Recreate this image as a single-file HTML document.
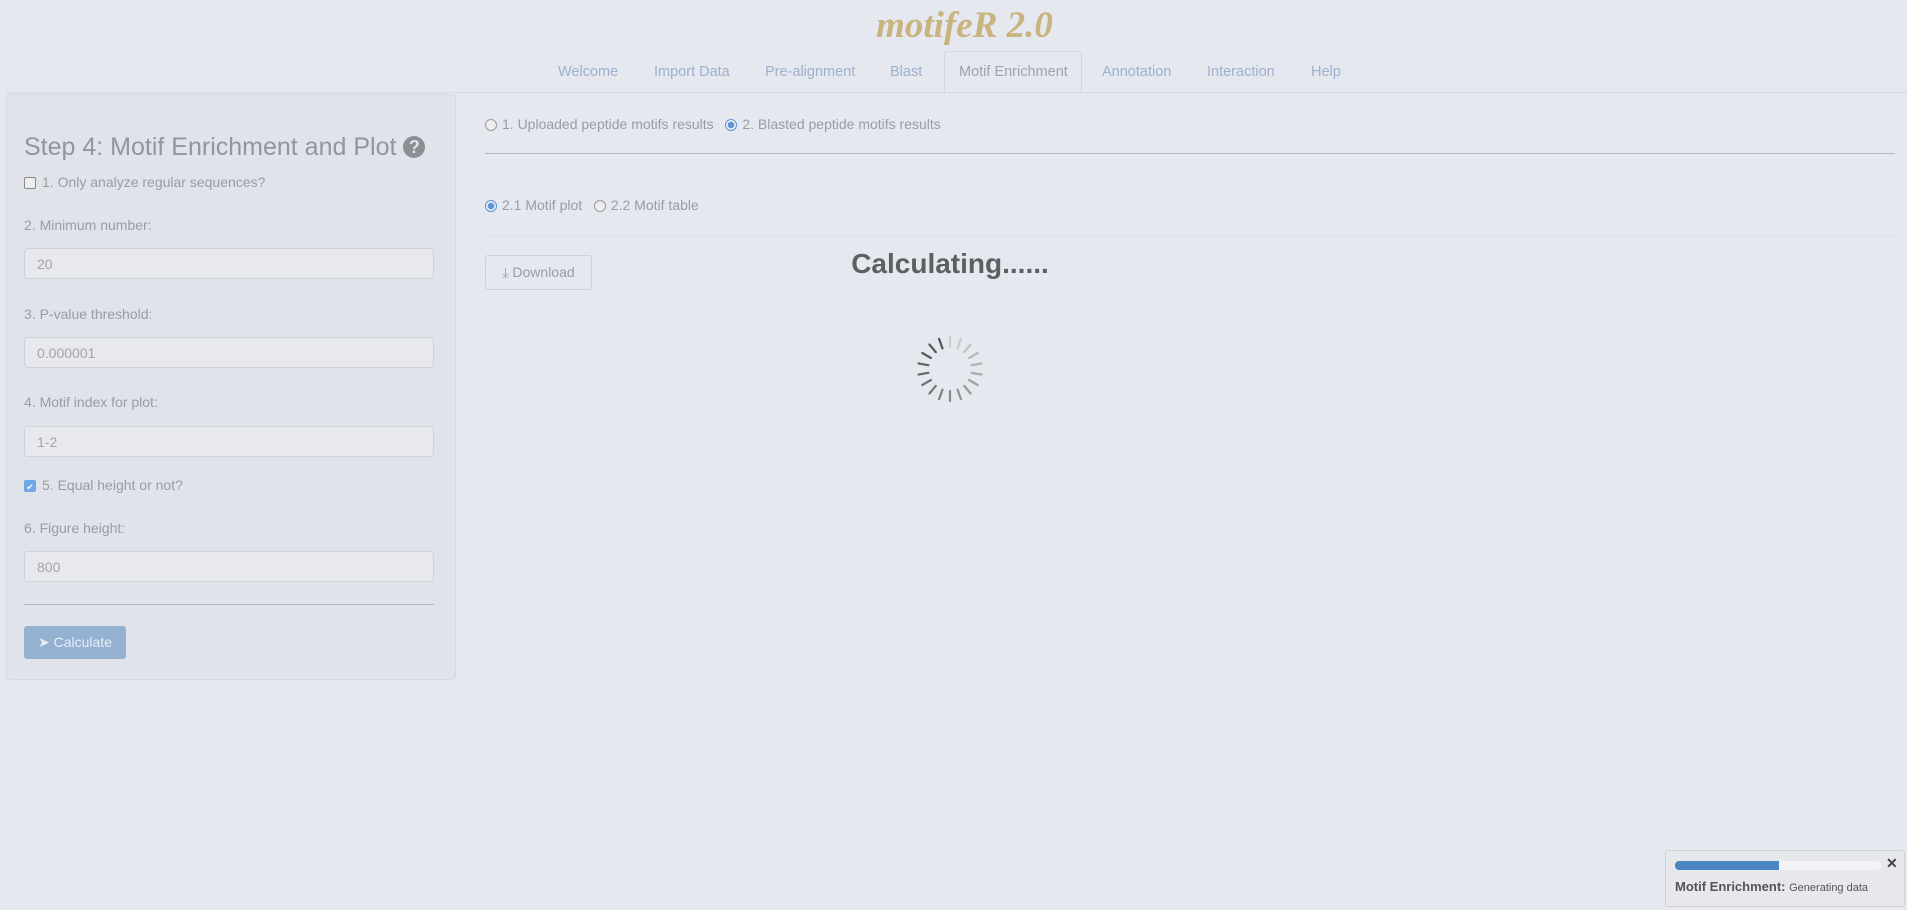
<!DOCTYPE html>
<html><head><meta charset="utf-8"><style>
body{margin:0;width:1907px;height:910px;background:#e5e8ef;font-family:"Liberation Sans",sans-serif;font-size:14px;color:#9a9ca3;position:relative;overflow:hidden}
.a{position:absolute}
.title{left:0;width:1907px;top:4px;text-align:center;font-family:"Liberation Serif",serif;font-style:italic;font-weight:bold;font-size:37px;color:#c9b47e;padding-left:22px;box-sizing:border-box}
.nav{top:92px;left:6px;right:0;border-top:1px solid #d6d9e0}
.tab{top:64px;color:#9db0cc;font-size:14.5px}
.act{left:944px;top:51px;width:136px;height:42px;border:1px solid #d4d7de;border-bottom:none;border-radius:4px 4px 0 0;background:#e5e8ef}
.side{left:6px;top:94px;width:448px;height:584px;background:#e0e3ea;border:1px solid #d6d9e0;border-radius:4px}
.inp{left:24px;height:31px;border:1px solid #cfd2d9;border-radius:4px;background:#e7e9ef;color:#a3a5ab;font-size:14px;line-height:31px;padding-left:12px;box-sizing:border-box;width:410px}
.lbl{left:24px;font-size:14px}
.cb{width:12px;height:12px;line-height:12px;overflow:hidden;border:1px solid #888;border-radius:2px;background:#eee;display:inline-block;vertical-align:-2px;margin-right:6px;box-sizing:border-box;text-align:center;font-size:9px}
.rd{width:12px;height:12px;border:1px solid #999;border-radius:50%;display:inline-block;vertical-align:-2px;margin-right:5px;box-sizing:border-box;background:#eee}
.rd.on{border-color:#5b95d9;background:radial-gradient(circle,#5b95d9 0 3px,#eee 3.5px)}
</style></head><body>
<div class="a title">motifeR 2.0</div>
<div class="a act"></div>
<div class="a nav"></div>
<div class="a tab" style="left:558px">Welcome</div>
<div class="a tab" style="left:654px">Import Data</div>
<div class="a tab" style="left:765px">Pre-alignment</div>
<div class="a tab" style="left:890px">Blast</div>
<div class="a tab" style="left:959px;color:#9ea3ab">Motif Enrichment</div>
<div class="a tab" style="left:1102px">Annotation</div>
<div class="a tab" style="left:1207px">Interaction</div>
<div class="a tab" style="left:1311px">Help</div>

<div class="a side"></div>
<div class="a" style="left:24px;top:133px;font-size:25px;color:#93959c">Step 4: Motif Enrichment and Plot <span style="display:inline-block;width:22px;height:22px;border-radius:50%;background:#8c8e94;color:#e0e3ea;font-size:18px;font-weight:bold;text-align:center;line-height:22px;vertical-align:2px">?</span></div>
<div class="a lbl" style="top:174px"><span class="cb"></span>1. Only analyze regular sequences?</div>
<div class="a lbl" style="top:217px">2. Minimum number:</div>
<div class="a inp" style="top:248px">20</div>
<div class="a lbl" style="top:306px">3. P-value threshold:</div>
<div class="a inp" style="top:337px">0.000001</div>
<div class="a lbl" style="top:394px">4. Motif index for plot:</div>
<div class="a inp" style="top:426px">1-2</div>
<div class="a lbl" style="top:477px"><span class="cb" style="background:#6fa6e6;border-color:#6fa6e6;color:#fff">✔</span>5. Equal height or not?</div>
<div class="a lbl" style="top:520px">6. Figure height:</div>
<div class="a inp" style="top:551px">800</div>
<div class="a" style="left:24px;top:604px;width:410px;border-top:1px solid #b4b7be"></div>
<div class="a" style="left:24px;top:626px;width:102px;height:33px;background:#94b1d1;border-radius:3px;color:#e8eef6;line-height:33px;text-align:center;font-size:14px">➤ Calculate</div>

<div class="a" style="left:485px;top:116px"><span class="rd"></span>1. Uploaded peptide motifs results &nbsp;&nbsp;<span class="rd on"></span>2. Blasted peptide motifs results</div>
<div class="a" style="left:485px;top:153px;width:1410px;border-top:1px solid #b4b7be"></div>
<div class="a" style="left:485px;top:197px"><span class="rd on"></span>2.1 Motif plot &nbsp;&nbsp;<span class="rd"></span>2.2 Motif table</div>
<div class="a" style="left:485px;top:235px;width:1410px;border-top:1px solid #dcdfe5"></div>
<div class="a" style="left:485px;top:255px;width:105px;height:33px;border:1px solid #cfd2d9;border-radius:3px;line-height:33px;text-align:center;color:#9a9ca3">⤓ Download</div>
<div class="a" style="left:750px;width:400px;text-align:center;top:248px;font-size:28px;font-weight:bold;color:#5e5f63">Calculating......</div>
<svg class="a" style="left:914px;top:333px" width="72" height="72" viewBox="-36 -36 72 72">
<g stroke-width="2.2" stroke-linecap="round">
<line x1="0" y1="-22" x2="0" y2="-32" stroke="#ccc" transform="rotate(0)"/>
<line x1="0" y1="-22" x2="0" y2="-32" stroke="#c8c8c8" transform="rotate(20)"/>
<line x1="0" y1="-22" x2="0" y2="-32" stroke="#c0c0c0" transform="rotate(40)"/>
<line x1="0" y1="-22" x2="0" y2="-32" stroke="#b8b8b8" transform="rotate(60)"/>
<line x1="0" y1="-22" x2="0" y2="-32" stroke="#b0b0b0" transform="rotate(80)"/>
<line x1="0" y1="-22" x2="0" y2="-32" stroke="#a8a8a8" transform="rotate(100)"/>
<line x1="0" y1="-22" x2="0" y2="-32" stroke="#a0a0a0" transform="rotate(120)"/>
<line x1="0" y1="-22" x2="0" y2="-32" stroke="#989898" transform="rotate(140)"/>
<line x1="0" y1="-22" x2="0" y2="-32" stroke="#909090" transform="rotate(160)"/>
<line x1="0" y1="-22" x2="0" y2="-32" stroke="#888" transform="rotate(180)"/>
<line x1="0" y1="-22" x2="0" y2="-32" stroke="#808080" transform="rotate(200)"/>
<line x1="0" y1="-22" x2="0" y2="-32" stroke="#787878" transform="rotate(220)"/>
<line x1="0" y1="-22" x2="0" y2="-32" stroke="#707070" transform="rotate(240)"/>
<line x1="0" y1="-22" x2="0" y2="-32" stroke="#686868" transform="rotate(260)"/>
<line x1="0" y1="-22" x2="0" y2="-32" stroke="#606060" transform="rotate(280)"/>
<line x1="0" y1="-22" x2="0" y2="-32" stroke="#585858" transform="rotate(300)"/>
<line x1="0" y1="-22" x2="0" y2="-32" stroke="#555" transform="rotate(320)"/>
<line x1="0" y1="-22" x2="0" y2="-32" stroke="#555" transform="rotate(340)"/>
</g></svg>

<div class="a" style="left:1665px;top:850px;width:240px;height:57px;background:#e7e8ec;border:1px solid #cfd1d6;border-radius:3px;box-sizing:border-box"></div>
<div class="a" style="left:1675px;top:861px;width:206px;height:9px;background:#f2f3f6;border-radius:4px;overflow:hidden"><div style="width:104px;height:9px;background:#4a86c0"></div></div>
<div class="a" style="left:1886px;top:855px;font-size:14px;font-weight:bold;color:#444">✕</div>
<div class="a" style="left:1675px;top:879px;font-size:13px;color:#555"><b>Motif Enrichment:</b> <span style="font-size:11px">Generating data</span></div>
</body></html>
